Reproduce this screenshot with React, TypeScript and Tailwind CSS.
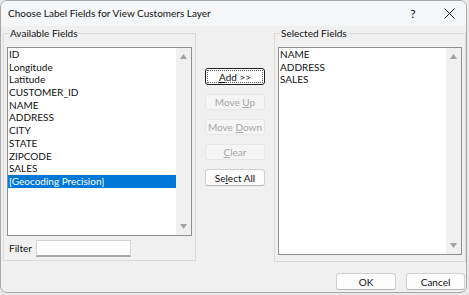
import React from 'react';

const available = [
    'ID',
    'Longitude',
    'Latitude',
    'CUSTOMER_ID',
    'NAME',
    'ADDRESS',
    'CITY',
    'STATE',
    'ZIPCODE',
    'SALES',
    '[Geocoding Precision]',
];

const selected = ['NAME', 'ADDRESS', 'SALES'];

const font = { fontFamily: 'Lato, "Noto Sans", "Liberation Sans", sans-serif' };

function ScrollTrack() {
    return (
        <div className="w-[15px] bg-[#f0f0f0] flex flex-col justify-between items-center py-[6px]">
            <svg width="7" height="5" viewBox="0 0 7 5">
                <path d="M0 5 L3.5 0 L7 5 Z" fill="#a3a3a3" />
            </svg>
            <svg width="7" height="5" viewBox="0 0 7 5">
                <path d="M0 0 L3.5 5 L7 0 Z" fill="#a3a3a3" />
            </svg>
        </div>
    );
}

function ListBox({ items, active, height }: { items: string[]; active?: number; height: string }) {
    return (
        <div className={`flex border border-[#8f8f8f] bg-white ${height}`}>
            <div className="flex-1 flex flex-col">
                {items.map((it, i) => (
                    <div
                        key={it}
                        className={
                            i === active
                                ? 'h-[12.7px] leading-[12.7px] pl-[1px] bg-[#0078d7] text-white'
                                : 'h-[12.7px] leading-[12.7px] pl-[1px] text-[#111]'
                        }
                    >
                        {it}
                    </div>
                ))}
            </div>
            <ScrollTrack />
        </div>
    );
}

function GroupBox({ label, className, children }: { label: string; className: string; children: React.ReactNode }) {
    return (
        <div className={`relative border border-[#dadada] ${className}`}>
            <span className="absolute left-[5px] top-[-8px] px-[1px] bg-[#f0f0f0] leading-[14px] text-[#111]">
                {label}
            </span>
            {children}
        </div>
    );
}

function Btn({ children, disabled, focused, className = '' }: { children: React.ReactNode; disabled?: boolean; focused?: boolean; className?: string }) {
    if (disabled) {
        return (
            <div className={`h-[16px] rounded-[3px] border border-[#e6e6e6] bg-[#f5f5f5] text-[#a6a6a6] flex items-center justify-center leading-none ${className}`}>
                {children}
            </div>
        );
    }
    if (focused) {
        return (
            <div className={`h-[17px] rounded-[3px] border border-[#1c1c1c] bg-white p-[1px] ${className}`}>
                <div className="h-full border border-dotted border-[#5a5a5a] flex items-center justify-center leading-none text-[#111]">
                    {children}
                </div>
            </div>
        );
    }
    return (
        <div className={`h-[17px] rounded-[3px] border border-[#d0d0d0] border-b-[#b5b5b5] bg-[#fdfdfd] text-[#111] flex items-center justify-center leading-none ${className}`}>
            {children}
        </div>
    );
}

export default function App() {
    return (
        <div className="w-[469px] h-[295px] bg-[#e9e9e9] text-[10px]" style={font}>
            <div className="w-[467px] h-[293px] rounded-[7px] border border-[#a8a8a8] bg-[#f0f0f0] overflow-hidden flex flex-col">
                {/* title bar */}
                <div className="h-[25px] bg-[#f4f6f8] flex items-center pl-[7px] text-[10px] text-[#111]">
                    <span className="flex-1">Choose Label Fields for View Customers Layer</span>
                    <span className="w-[12px] text-center mr-[25px] text-[12px]">?</span>
                    <svg width="11" height="11" viewBox="0 0 11 11" className="mr-[11px]">
                        <path d="M0.5 0.5 L10.5 10.5 M10.5 0.5 L0.5 10.5" stroke="#1a1a1a" strokeWidth="1" />
                    </svg>
                </div>

                <div className="flex pt-[7px]">
                    {/* left group */}
                    <GroupBox label="Available Fields" className="ml-[2px] w-[193px] h-[228px] pt-[13px] px-[3px]">
                        <ListBox items={available} active={10} height="h-[189px]" />
                        <div className="flex items-center mt-[4px] ml-[2px]">
                            <span className="text-[#111] w-[27px]">Filter</span>
                            <div className="w-[95px] h-[17px] bg-white border border-[#d4d4d4] border-b-2 border-b-[#a8a8a8]" />
                        </div>
                    </GroupBox>

                    {/* middle buttons */}
                    <div className="w-[78px] pl-[9px] pr-[9px] pt-[35px] flex flex-col gap-[9px]">
                        <Btn focused>
                            <span><span className="underline">A</span>dd &gt;&gt;</span>
                        </Btn>
                        <Btn disabled>
                            <span>Move <span className="underline">U</span>p</span>
                        </Btn>
                        <Btn disabled>
                            <span>Move <span className="underline">D</span>own</span>
                        </Btn>
                        <Btn disabled>
                            <span><span className="underline">C</span>lear</span>
                        </Btn>
                        <Btn>
                            <span>Se<span className="underline">l</span>ect All</span>
                        </Btn>
                    </div>

                    {/* right group */}
                    <GroupBox label="Selected Fields" className="w-[192px] h-[229px] pt-[13px] px-[3px]">
                        <ListBox items={selected} height="h-[208px]" />
                    </GroupBox>
                </div>

                {/* footer */}
                <div className="flex justify-end gap-[10px] pr-[1px] mt-[11px]">
                    <Btn className="w-[60px]">OK</Btn>
                    <Btn className="w-[59px]">Cancel</Btn>
                </div>
            </div>
        </div>
    );
}
